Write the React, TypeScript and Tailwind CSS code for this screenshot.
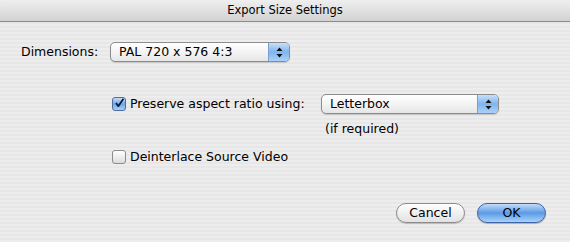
import React from 'react';

function Popup({ label, width }: { label: string; width: string }) {
  return (
    <div
      className={`${width} h-[20px] flex rounded-[5px] border border-[#8c8c8c] shadow-[0_1px_1px_rgba(0,0,0,0.15)] overflow-hidden bg-gradient-to-b from-[#ffffff] via-[#f4f4f4] to-[#e6e6e6]`}
    >
      <div className="flex-1 flex items-center pl-[8px] text-[12.5px] text-black leading-none">{label}</div>
      <div className="w-[21px] flex items-center justify-center border-l border-[#7a9fd0] bg-gradient-to-b from-[#c7e0fa] via-[#7fb4ee] to-[#a9d2fb]">
        <svg width="7" height="11" viewBox="0 0 7 11">
          <path d="M3.5 0.5 L6.5 4 L0.5 4 Z" fill="#111" />
          <path d="M3.5 10.5 L6.5 7 L0.5 7 Z" fill="#111" />
        </svg>
      </div>
    </div>
  );
}

function Checkbox({ checked }: { checked: boolean }) {
  return (
    <div
      className={`w-[14px] h-[14px] rounded-[3px] border flex items-center justify-center ${
        checked
          ? 'border-[#4d6f9f] bg-gradient-to-b from-[#c6def8] via-[#6ea6e6] to-[#a9d0f8]'
          : 'border-[#8c8c8c] bg-gradient-to-b from-[#ffffff] to-[#dcdcdc]'
      }`}
    >
      {checked && (
        <svg width="14" height="14" viewBox="0 0 14 14" className="-mt-[2px] ml-[1px]">
          <path d="M2.5 7 L5.5 11 L12 1.5" fill="none" stroke="#0b1a3a" strokeWidth="2.2" strokeLinejoin="round" />
        </svg>
      )}
    </div>
  );
}

export default function App() {
  return (
    <div
      className="w-[570px] h-[242px] flex flex-col text-[12.5px] text-black bg-[repeating-linear-gradient(to_bottom,#ededed_0px,#ededed_2px,#e7e7e7_2px,#e7e7e7_4px)]"
      style={{ fontFamily: '"DejaVu Sans", "Lucida Grande", sans-serif' }}
    >
      {/* Title bar */}
      <div className="h-[22px] shrink-0 rounded-t-[6px] border-b border-[#8a8a8a] bg-gradient-to-b from-[#efefef] to-[#d2d2d2] flex items-center justify-center text-[11.5px] leading-none">
        Export Size Settings
      </div>

      {/* Dimensions */}
      <div className="mt-[20px] flex items-center pl-[21px]">
        <span className="w-[89px]">Dimensions:</span>
        <Popup label="PAL 720 x 576 4:3" width="w-[180px]" />
      </div>

      {/* Preserve aspect */}
      <div className="mt-[32px] flex items-center pl-[112px]">
        <Checkbox checked />
        <span className="ml-[4px] w-[191px]">Preserve aspect ratio using:</span>
        <Popup label="Letterbox" width="w-[178px]" />
      </div>
      <div className="mt-[9px] pl-[325px] leading-none">(if required)</div>

      {/* Deinterlace */}
      <div className="mt-[12px] flex items-center pl-[112px]">
        <Checkbox checked={false} />
        <span className="ml-[4px]">Deinterlace Source Video</span>
      </div>

      {/* Buttons */}
      <div className="mt-[37px] flex justify-end pr-[24px] gap-[12px]">
        <button className="w-[69px] h-[20px] rounded-full border border-[#8c8c8c] bg-gradient-to-b from-[#ffffff] via-[#f0f0f0] to-[#e2e2e2] shadow-[0_1px_1px_rgba(0,0,0,0.2)] text-[12.5px] leading-none">
          Cancel
        </button>
        <button className="w-[69px] h-[20px] rounded-full border border-[#3f63a3] bg-gradient-to-b from-[#c2dcf8] via-[#5b9ae6] to-[#a8d3fb] shadow-[0_1px_1px_rgba(0,0,0,0.25)] text-[12.5px] leading-none">
          OK
        </button>
      </div>
    </div>
  );
}
